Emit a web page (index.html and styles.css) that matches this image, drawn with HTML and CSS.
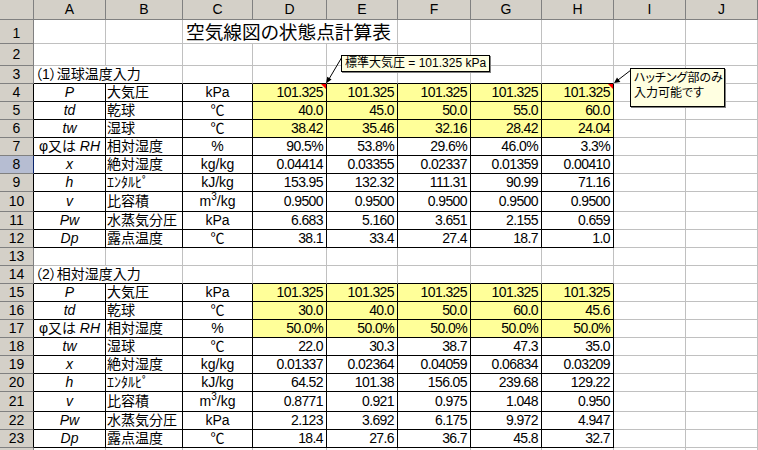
FILE: index.html
```html
<!DOCTYPE html>
<html lang="ja">
<head>
<meta charset="utf-8">
<title>空気線図の状態点計算表</title>
<link rel="stylesheet" href="styles.css">
</head>
<body>
<div class="sheet">
  <div class="r hr">
    <div class="h"></div><div class="h">A</div><div class="h">B</div><div class="h">C</div><div class="h">D</div><div class="h">E</div><div class="h">F</div><div class="h">G</div><div class="h">H</div><div class="h">I</div><div class="h">J</div>
  </div>
  <div class="r r1">
    <div class="h">1</div><div></div><div></div><div class="title s3">空気線図の状態点計算表</div><div></div><div></div><div></div><div></div><div></div>
  </div>
  <div class="r r2">
    <div class="h">2</div><div></div><div></div><div></div><div></div><div></div><div></div><div></div><div></div><div></div><div></div>
  </div>
  <div class="r">
    <div class="h">3</div><div class="sec s2 kb">（1）湿球温度入力</div><div class="kb"></div><div class="kb"></div><div class="kb"></div><div class="kb"></div><div class="kb"></div><div class="kb"></div><div></div><div></div>
  </div>
  <div class="r">
    <div class="h hk">4</div><div class="k m i">P</div><div class="k l">大気圧</div><div class="k m">kPa</div><div class="k y n cm">101.325<span class="tri"></span></div><div class="k y n">101.325</div><div class="k y n">101.325</div><div class="k y n">101.325</div><div class="k y n cm">101.325<span class="tri"></span></div><div></div><div></div>
  </div>
  <div class="r">
    <div class="h hk">5</div><div class="k m i">td</div><div class="k l">乾球</div><div class="k m">℃</div><div class="k y n">40.0</div><div class="k y n">45.0</div><div class="k y n">50.0</div><div class="k y n">55.0</div><div class="k y n">60.0</div><div></div><div></div>
  </div>
  <div class="r">
    <div class="h hk">6</div><div class="k m i">tw</div><div class="k l">湿球</div><div class="k m">℃</div><div class="k y n">38.42</div><div class="k y n">35.46</div><div class="k y n">32.16</div><div class="k y n">28.42</div><div class="k y n">24.04</div><div></div><div></div>
  </div>
  <div class="r">
    <div class="h hk">7</div><div class="k m">φ又は <i>RH</i></div><div class="k l">相対湿度</div><div class="k m">%</div><div class="k n">90.5%</div><div class="k n">53.8%</div><div class="k n">29.6%</div><div class="k n">46.0%</div><div class="k n">3.3%</div><div></div><div></div>
  </div>
  <div class="r">
    <div class="h hk hs">8</div><div class="k m i">x</div><div class="k l">絶対湿度</div><div class="k m">kg/kg</div><div class="k n">0.04414</div><div class="k n">0.03355</div><div class="k n">0.02337</div><div class="k n">0.01359</div><div class="k n">0.00410</div><div></div><div></div>
  </div>
  <div class="r">
    <div class="h hk">9</div><div class="k m i">h</div><div class="k l">ｴﾝﾀﾙﾋﾟ</div><div class="k m">kJ/kg</div><div class="k n">153.95</div><div class="k n">132.32</div><div class="k n">111.31</div><div class="k n">90.99</div><div class="k n">71.16</div><div></div><div></div>
  </div>
  <div class="r tall">
    <div class="h hk">10</div><div class="k m i">v</div><div class="k l">比容積</div><div class="k m">m<sup>3</sup>/kg</div><div class="k n">0.9500</div><div class="k n">0.9500</div><div class="k n">0.9500</div><div class="k n">0.9500</div><div class="k n">0.9500</div><div></div><div></div>
  </div>
  <div class="r">
    <div class="h hk">11</div><div class="k m i">Pw</div><div class="k l">水蒸気分圧</div><div class="k m">kPa</div><div class="k n">6.683</div><div class="k n">5.160</div><div class="k n">3.651</div><div class="k n">2.155</div><div class="k n">0.659</div><div></div><div></div>
  </div>
  <div class="r">
    <div class="h hk">12</div><div class="k m i">Dp</div><div class="k l">露点温度</div><div class="k m">℃</div><div class="k n">38.1</div><div class="k n">33.4</div><div class="k n">27.4</div><div class="k n">18.7</div><div class="k n">1.0</div><div></div><div></div>
  </div>
  <div class="r">
    <div class="h">13</div><div></div><div></div><div></div><div></div><div></div><div></div><div></div><div></div><div></div><div></div>
  </div>
  <div class="r">
    <div class="h">14</div><div class="sec s2 kb">（2）相対湿度入力</div><div class="kb"></div><div class="kb"></div><div class="kb"></div><div class="kb"></div><div class="kb"></div><div class="kb"></div><div></div><div></div>
  </div>
  <div class="r">
    <div class="h hk">15</div><div class="k m i">P</div><div class="k l">大気圧</div><div class="k m">kPa</div><div class="k y n">101.325</div><div class="k y n">101.325</div><div class="k y n">101.325</div><div class="k y n">101.325</div><div class="k y n">101.325</div><div></div><div></div>
  </div>
  <div class="r">
    <div class="h hk">16</div><div class="k m i">td</div><div class="k l">乾球</div><div class="k m">℃</div><div class="k y n">30.0</div><div class="k y n">40.0</div><div class="k y n">50.0</div><div class="k y n">60.0</div><div class="k y n">45.6</div><div></div><div></div>
  </div>
  <div class="r">
    <div class="h hk">17</div><div class="k m">φ又は <i>RH</i></div><div class="k l">相対湿度</div><div class="k m">%</div><div class="k y n">50.0%</div><div class="k y n">50.0%</div><div class="k y n">50.0%</div><div class="k y n">50.0%</div><div class="k y n">50.0%</div><div></div><div></div>
  </div>
  <div class="r">
    <div class="h hk">18</div><div class="k m i">tw</div><div class="k l">湿球</div><div class="k m">℃</div><div class="k n">22.0</div><div class="k n">30.3</div><div class="k n">38.7</div><div class="k n">47.3</div><div class="k n">35.0</div><div></div><div></div>
  </div>
  <div class="r">
    <div class="h hk">19</div><div class="k m i">x</div><div class="k l">絶対湿度</div><div class="k m">kg/kg</div><div class="k n">0.01337</div><div class="k n">0.02364</div><div class="k n">0.04059</div><div class="k n">0.06834</div><div class="k n">0.03209</div><div></div><div></div>
  </div>
  <div class="r">
    <div class="h hk">20</div><div class="k m i">h</div><div class="k l">ｴﾝﾀﾙﾋﾟ</div><div class="k m">kJ/kg</div><div class="k n">64.52</div><div class="k n">101.38</div><div class="k n">156.05</div><div class="k n">239.68</div><div class="k n">129.22</div><div></div><div></div>
  </div>
  <div class="r tall">
    <div class="h hk">21</div><div class="k m i">v</div><div class="k l">比容積</div><div class="k m">m<sup>3</sup>/kg</div><div class="k n">0.8771</div><div class="k n">0.921</div><div class="k n">0.975</div><div class="k n">1.048</div><div class="k n">0.950</div><div></div><div></div>
  </div>
  <div class="r">
    <div class="h hk">22</div><div class="k m i">Pw</div><div class="k l">水蒸気分圧</div><div class="k m">kPa</div><div class="k n">2.123</div><div class="k n">3.692</div><div class="k n">6.175</div><div class="k n">9.972</div><div class="k n">4.947</div><div></div><div></div>
  </div>
  <div class="r">
    <div class="h hk">23</div><div class="k m i">Dp</div><div class="k l">露点温度</div><div class="k m">℃</div><div class="k n">18.4</div><div class="k n">27.6</div><div class="k n">36.7</div><div class="k n">45.8</div><div class="k n">32.7</div><div></div><div></div>
  </div>
  <div class="r">
    <div class="h"></div><div></div><div></div><div></div><div></div><div></div><div></div><div></div><div></div><div></div><div></div>
  </div>

  <svg class="arrows" width="758" height="450" viewBox="0 0 758 450" aria-hidden="true">
    <line x1="342" y1="57" x2="329" y2="79" stroke="#000" stroke-width="1"/>
    <polygon points="326,83.5 327.2,76.8 331.6,79.4" fill="#000"/>
    <line x1="631" y1="70" x2="618" y2="80" stroke="#000" stroke-width="1"/>
    <polygon points="614,83 617,77.6 620.4,82" fill="#000"/>
  </svg>
  <div class="note n1">標準大気圧 = 101.325 kPa</div>
  <div class="note n2">ハッチング部のみ<br>入力可能です</div>
</div>
</body>
</html>
```
FILE: styles.css
```css
* { box-sizing: border-box; }
html, body { margin: 0; padding: 0; background: #fff; }
body {
  font-family: "Liberation Sans", "Noto Sans CJK JP", sans-serif;
  font-size: 14px;
  color: #000;
  font-feature-settings: "palt";
}
.sheet {
  position: relative;
  width: 758px;
  height: 450px;
  overflow: hidden;
}
.r {
  display: grid;
  grid-template-columns: 34px 72px 77px 70px 74px 71px 73px 71px 72px 72px 72px;
  height: 18px;
  line-height: 17px;
}
.r > div {
  border-right: 1px solid #c0c0c0;
  border-bottom: 1px solid #c0c0c0;
  white-space: nowrap;
  overflow: hidden;
}
.r.hr { height: 20px; line-height: 19px; }
.r.r1 { height: 24px; line-height: 23px; }
.r.r2 { height: 22px; line-height: 21px; }
.r.tall { height: 20px; line-height: 19px; }

.r > .h {
  background: #d4d0c8;
  border-right-color: #808080;
  border-bottom-color: #808080;
  text-align: center;
}
.r > .hk { border-right-color: #000; }
.r > .hs { background: #b6bdd2; border-right: 1px solid #0a246a; }
.r1 > .h { padding-top: 2px; }

.s2 { grid-column: span 2; }
.s3 { grid-column: span 3; }

.title {
  font-size: 18.7px;
  padding-left: 3px;
  padding-top: 1px;
}
.sec { padding-left: 1px; }

.r > .k { border-right-color: #000; border-bottom-color: #000; }
.r > .kb { border-bottom-color: #000; }

.y { background: #ffff99; }
.n { text-align: right; padding-right: 3px; letter-spacing: -0.6px; }
.m { text-align: center; }
.l { padding-left: 1px; }
.i, .r i { font-style: italic; }

sup {
  font-size: 10px;
  line-height: 0;
  vertical-align: 6px;
}

.cm { position: relative; }
.tri {
  position: absolute;
  top: 0;
  right: 0;
  width: 0;
  height: 0;
  border-top: 5px solid #ff0000;
  border-left: 5px solid transparent;
}

.arrows {
  position: absolute;
  left: 0;
  top: 0;
  pointer-events: none;
}
.note {
  position: absolute;
  background: #ffffe1;
  border: 1px solid #000;
  box-shadow: 1px 1px 0 #808080;
  font-size: 12px;
  white-space: nowrap;
}
.n1 {
  left: 341px;
  top: 55px;
  width: 149px;
  height: 17px;
  line-height: 15px;
  padding: 0 0 0 3px;
}
.n2 {
  left: 630px;
  top: 68px;
  width: 95px;
  height: 39px;
  line-height: 14.5px;
  padding: 2px 0 0 3px;
}
```
